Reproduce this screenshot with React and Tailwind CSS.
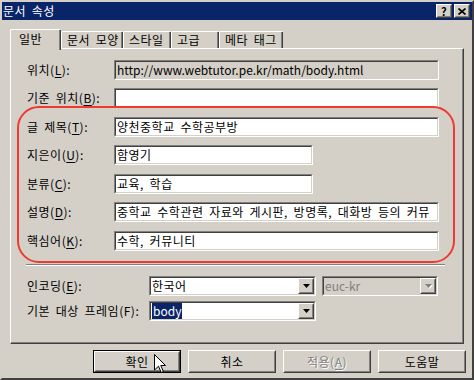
import React from "react";

const FONT = "font-['Noto_Sans_CJK_KR',sans-serif] [word-spacing:2.5px] tracking-[0.5px]";

const Sunken = ({ className = "", inner = "bg-white", children }) => (
  <div className={`border border-t-[#808080] border-l-[#808080] border-b-white border-r-white ${className}`}>
    <div
      className={`flex h-full items-center overflow-hidden whitespace-nowrap border border-t-[#404040] border-l-[#404040] border-b-[#d4d0c8] border-r-[#d4d0c8] ${inner}`}
    >
      {children}
    </div>
  </div>
);

const Raised = ({ className = "", children }) => (
  <div className={`border border-t-white border-l-white border-b-[#404040] border-r-[#404040] bg-[#d4d0c8] ${className}`}>
    <div className="flex h-full items-center justify-center border border-t-[#d4d0c8] border-l-[#d4d0c8] border-b-[#808080] border-r-[#808080]">
      {children}
    </div>
  </div>
);

const Arrow = ({ disabled }) => (
  <svg width="7" height="4" viewBox="0 0 7 4" className={disabled ? "drop-shadow-[1px_1px_0_#ffffff]" : ""}>
    <polygon points="0,0 7,0 3.5,4" fill={disabled ? "#808080" : "#000"} />
  </svg>
);

const Field = ({ label, acc, rest = "):", w = "w-[325px]", value, mt = "mt-0", disabled, latin }) => (
  <div className={`flex h-[20px] items-center ${mt}`}>
    <div className="w-[87px] text-[12px] leading-none">
      {label}(<span className="underline underline-offset-2">{acc}</span>{rest}
    </div>
    <Sunken className={`h-[20px] ${w}`} inner={disabled ? "bg-[#d4d0c8]" : "bg-white"}>
      <span className={`pl-[1px] text-[12px] leading-none ${latin ? "tracking-normal" : ""}`}>{value}</span>
    </Sunken>
  </div>
);

const Combo = ({ w, children, disabled }) => (
  <Sunken className={`h-[20px] ${w}`} inner={disabled ? "bg-[#d4d0c8]" : "bg-white"}>
    <div className="flex h-full flex-1 items-center overflow-hidden pl-[1px] text-[12px] leading-none">
      {children}
    </div>
    <Raised className="h-[16px] w-[16px] shrink-0">
      <Arrow disabled={disabled} />
    </Raised>
  </Sunken>
);

const Tab = ({ label, w, active }) =>
  active ? (
    <div
      className={`relative z-10 -mb-[2px] flex h-[21px] ${w} rounded-t-[2px] border-l border-t border-l-white border-t-white bg-[#d4d0c8]`}
    >
      <div className="flex flex-1 items-center border-r border-r-[#404040] pb-[3px] pl-[8px] text-[12px] leading-none shadow-[inset_-1px_0_0_#808080]">
        {label}
      </div>
    </div>
  ) : (
    <div className={`flex h-[17px] ${w} rounded-t-[2px] border-l border-t border-l-white border-t-white`}>
      <div className="flex flex-1 items-center border-r border-r-[#404040] pl-[5px] text-[12px] leading-none shadow-[inset_-1px_0_0_#808080]">
        {label}
      </div>
    </div>
  );

const Button = ({ children, isDefault, disabled }) => {
  const face = (
    <Raised className="h-full w-full">
      <span
        className={`text-[12px] leading-none ${disabled ? "text-[#808080] [text-shadow:1px_1px_0_#ffffff]" : "text-black"}`}
      >
        {children}
      </span>
    </Raised>
  );
  return isDefault ? (
    <div className="h-[23px] w-[88px] border border-black">{face}</div>
  ) : (
    <div className="h-[23px] w-[88px]">{face}</div>
  );
};

export default function App() {
  return (
    <div
      className={`relative flex h-[380px] w-[474px] flex-col border-2 border-t-[#d4d0c8] border-l-[#d4d0c8] border-b-[#404040] border-r-[#404040] bg-[#d4d0c8] text-black ${FONT}`}
    >
      {/* title bar */}
      <div className="flex h-[18px] shrink-0 items-center bg-[#0a246a] pl-[1px] pr-[2px]">
        <span className="flex-1 text-[12px] leading-none text-white">문서 속성</span>
        <Raised className="h-[14px] w-[16px]">
          <span className="text-[11px] font-bold leading-none">?</span>
        </Raised>
        <Raised className="ml-[2px] h-[14px] w-[16px]">
          <svg width="8" height="7" viewBox="0 0 8 7">
            <path d="M0.5 0.5 L7.5 6.5 M7.5 0.5 L0.5 6.5" stroke="#000" strokeWidth="1.6" />
          </svg>
        </Raised>
      </div>

      {/* tabs */}
      <div className="ml-[8px] mt-[8px] flex h-[20px] items-end">
        <Tab label="일반" w="w-[51px]" active />
        <Tab label="문서 모양" w="w-[62px]" />
        <Tab label="스타일" w="w-[48px]" />
        <Tab label="고급" w="w-[48px]" />
        <Tab label="메타 태그" w="w-[64px]" />
      </div>

      {/* panel */}
      <div className="relative ml-[8px] h-[296px] w-[454px] border border-t-white border-l-white border-b-[#404040] border-r-[#404040]">
        <div className="h-full border-r border-b border-r-[#808080] border-b-[#808080] pl-[16px] pt-[11px]">
          <Field
            label="위치"
            acc="L"
            disabled
            latin
            value="http://www.webtutor.pe.kr/math/body.html"
          />
          <Field label="기준 위치" acc="B" mt="mt-[8px]" value="" />
          <Field label="글 제목" acc="T" mt="mt-[9px]" value="양천중학교 수학공부방" />
          <Field label="지은이" acc="U" mt="mt-[8px]" w="w-[199px]" value="함영기" />
          <Field label="분류" acc="C" mt="mt-[9px]" w="w-[199px]" value="교육, 학습" />
          <Field
            label="설명"
            acc="D"
            mt="mt-[8px]"
            value="중학교 수학관련 자료와 게시판, 방명록, 대화방 등의 커뮤"
          />
          <Field label="핵심어" acc="K" mt="mt-[9px]" value="수학, 커뮤니티" />

          <div className="-ml-[1px] mt-[13px] h-[2px] w-[419px] border-t border-b border-t-[#808080] border-b-white" />

          <div className="mt-[10px] flex h-[20px] items-center">
            <div className="w-[122px] text-[12px] leading-none">
              인코딩(<span className="underline underline-offset-2">E</span>):
            </div>
            <Combo w="w-[167px]">한국어</Combo>
            <div className="ml-[6px]">
              <Combo w="w-[116px]" disabled>
                <span className="tracking-normal text-[#808080]">euc-kr</span>
              </Combo>
            </div>
          </div>
          <div className="mt-[5px] flex h-[20px] items-center">
            <div className="w-[122px] text-[12px] leading-none">기본 대상 프레임(F):</div>
            <Combo w="w-[167px]">
              <span className="bg-[#0a246a] px-[1px] py-[2px] tracking-normal text-white">body</span>
            </Combo>
          </div>
        </div>

        {/* red annotation */}
        <div className="pointer-events-none absolute left-[6px] top-[57px] h-[157px] w-[438px] rounded-[22px] border-2 border-[#f03a30]" />
      </div>

      {/* buttons */}
      <div className="ml-[91px] mt-[6px] flex gap-[7px]">
        <Button isDefault>확인</Button>
        <Button>취소</Button>
        <Button disabled>
          적용(<span className="underline underline-offset-2">A</span>)
        </Button>
        <Button>도움말</Button>
      </div>

      {/* mouse cursor */}
      <svg
        className="pointer-events-none absolute left-[152px] top-[352px]"
        width="12"
        height="20"
        viewBox="0 0 12 20"
      >
        <polygon
          points="0.5,0.5 0.5,16 4.5,12.2 7.2,18.5 9.4,17.6 6.8,11.5 11.5,11.5"
          fill="#fff"
          stroke="#000"
          strokeWidth="1"
          strokeLinejoin="miter"
        />
      </svg>
    </div>
  );
}
